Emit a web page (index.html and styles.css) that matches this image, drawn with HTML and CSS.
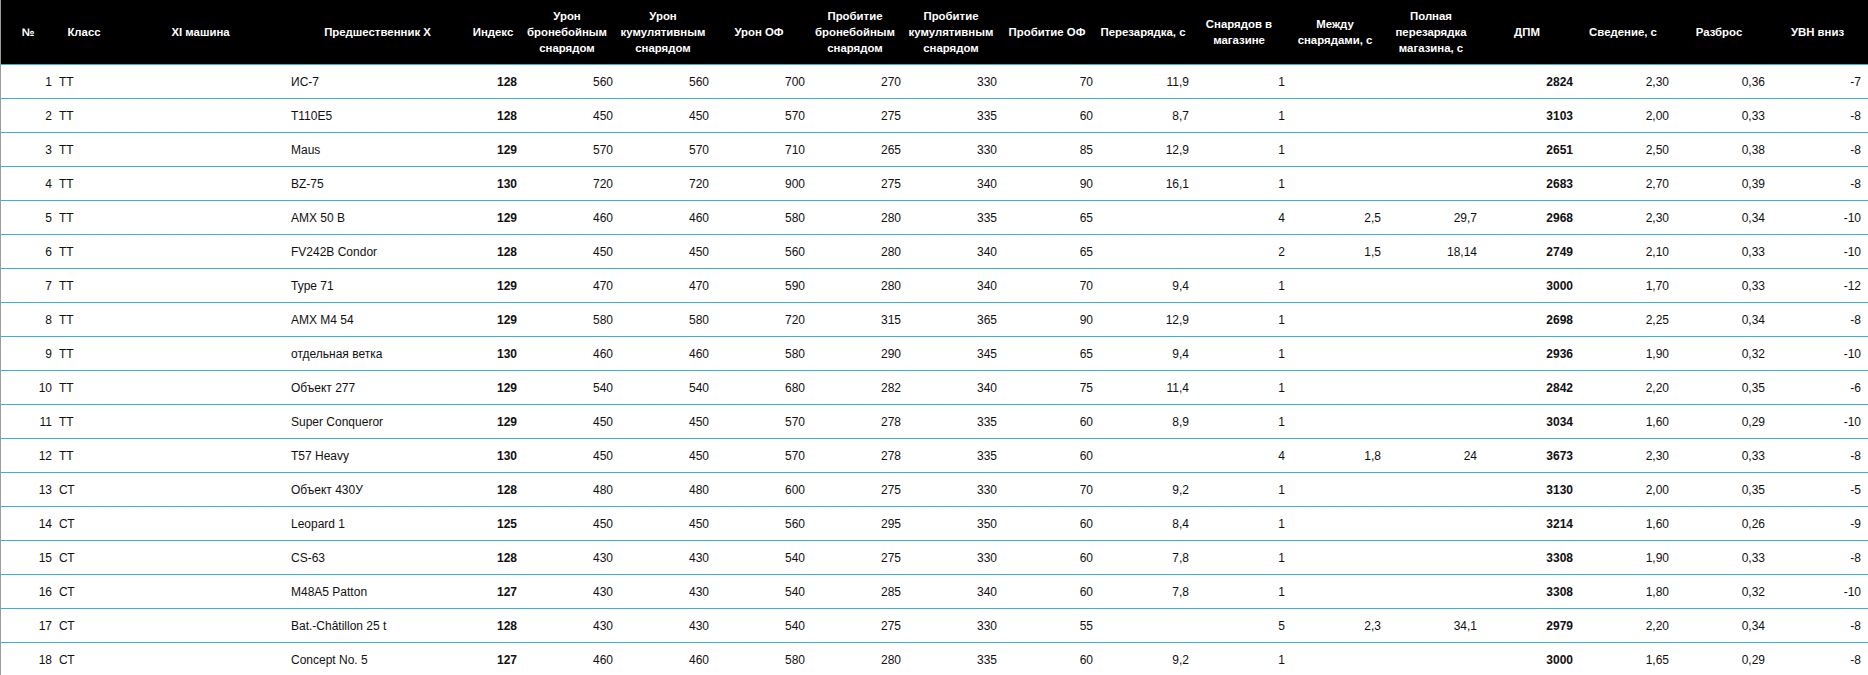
FILE: index.html
```html
<!DOCTYPE html>
<html lang="ru">
<head>
<meta charset="utf-8">
<title>Таблица</title>
<link rel="stylesheet" href="styles.css">
</head>
<body>
<div class="page">
<table class="stats">
<colgroup>
<col class="c-no"><col class="c-cls"><col class="c-xi"><col class="c-pred"><col class="c-idx">
<col class="c-std"><col class="c-std"><col class="c-std"><col class="c-std"><col class="c-std"><col class="c-std"><col class="c-std"><col class="c-std"><col class="c-std"><col class="c-std"><col class="c-std"><col class="c-std"><col class="c-std"><col class="c-last">
</colgroup>
<thead>
<tr>
<th>№</th><th>Класс</th><th>XI машина</th><th>Предшественник X</th><th>Индекс</th>
<th>Урон<br>бронебойным<br>снарядом</th>
<th>Урон<br>кумулятивным<br>снарядом</th>
<th>Урон ОФ</th>
<th>Пробитие<br>бронебойным<br>снарядом</th>
<th>Пробитие<br>кумулятивным<br>снарядом</th>
<th>Пробитие ОФ</th>
<th>Перезарядка, с</th>
<th>Снарядов в<br>магазине</th>
<th>Между<br>снарядами, с</th>
<th>Полная<br>перезарядка<br>магазина, с</th>
<th>ДПМ</th>
<th>Сведение, с</th>
<th>Разброс</th>
<th>УВН вниз</th>
</tr>
</thead>
<tbody id="rows"></tbody>
</table>
</div>
<script src="app.js"></script>
</body>
</html>
```

FILE: styles.css
```css
html, body {
  margin: 0;
  padding: 0;
  background: #ffffff;
}

.page {
  border-left: 1px solid #9c9c9c;
  min-height: 675px;
}

.stats {
  border-collapse: separate;
  border-spacing: 0;
  table-layout: fixed;
  width: 1867px;
  font-family: "Liberation Sans", Arial, sans-serif;
  font-size: 12px;
  color: #111111;
}

.c-no { width: 54px; }
.c-cls { width: 58px; }
.c-xi { width: 175px; }
.c-pred { width: 179px; }
.c-idx { width: 52px; }
.c-std { width: 96px; }
.c-last { width: 101px; }

.stats th {
  background: #000000;
  color: #ffffff;
  font-weight: bold;
  font-size: 11.4px;
  line-height: 16px;
  text-align: center;
  vertical-align: middle;
  white-space: nowrap;
  height: 65px;
  box-sizing: border-box;
  padding: 0 1px;
  border-bottom: 1px solid #3aafe2;
}

.stats td {
  height: 34px;
  box-sizing: border-box;
  padding: 0 2px 0 3px;
  border-bottom: 1px solid #3aafe2;
  vertical-align: middle;
  white-space: nowrap;
  overflow: hidden;
}

.stats td.num {
  text-align: right;
}

.stats td.txt {
  text-align: left;
}

.stats td.b {
  font-weight: bold;
}

.stats td.first {
  padding-right: 3px;
}

.stats td.cls {
  padding-left: 4px;
}

.stats td.lastcol {
  padding-right: 7px;
}
```

FILE: app.js
```js
const data = [
  [1, "ТТ", "ИС-7", 128, 560, 560, 700, 270, 330, 70, "11,9", 1, "", "", 2824, "2,30", "0,36", -7],
  [2, "ТТ", "T110E5", 128, 450, 450, 570, 275, 335, 60, "8,7", 1, "", "", 3103, "2,00", "0,33", -8],
  [3, "ТТ", "Maus", 129, 570, 570, 710, 265, 330, 85, "12,9", 1, "", "", 2651, "2,50", "0,38", -8],
  [4, "ТТ", "BZ-75", 130, 720, 720, 900, 275, 340, 90, "16,1", 1, "", "", 2683, "2,70", "0,39", -8],
  [5, "ТТ", "AMX 50 B", 129, 460, 460, 580, 280, 335, 65, "", 4, "2,5", "29,7", 2968, "2,30", "0,34", -10],
  [6, "ТТ", "FV242B Condor", 128, 450, 450, 560, 280, 340, 65, "", 2, "1,5", "18,14", 2749, "2,10", "0,33", -10],
  [7, "ТТ", "Type 71", 129, 470, 470, 590, 280, 340, 70, "9,4", 1, "", "", 3000, "1,70", "0,33", -12],
  [8, "ТТ", "AMX M4 54", 129, 580, 580, 720, 315, 365, 90, "12,9", 1, "", "", 2698, "2,25", "0,34", -8],
  [9, "ТТ", "отдельная ветка", 130, 460, 460, 580, 290, 345, 65, "9,4", 1, "", "", 2936, "1,90", "0,32", -10],
  [10, "ТТ", "Объект 277", 129, 540, 540, 680, 282, 340, 75, "11,4", 1, "", "", 2842, "2,20", "0,35", -6],
  [11, "ТТ", "Super Conqueror", 129, 450, 450, 570, 278, 335, 60, "8,9", 1, "", "", 3034, "1,60", "0,29", -10],
  [12, "ТТ", "T57 Heavy", 130, 450, 450, 570, 278, 335, 60, "", 4, "1,8", "24", 3673, "2,30", "0,33", -8],
  [13, "СТ", "Объект 430У", 128, 480, 480, 600, 275, 330, 70, "9,2", 1, "", "", 3130, "2,00", "0,35", -5],
  [14, "СТ", "Leopard 1", 125, 450, 450, 560, 295, 350, 60, "8,4", 1, "", "", 3214, "1,60", "0,26", -9],
  [15, "СТ", "CS-63", 128, 430, 430, 540, 275, 330, 60, "7,8", 1, "", "", 3308, "1,90", "0,33", -8],
  [16, "СТ", "M48A5 Patton", 127, 430, 430, 540, 285, 340, 60, "7,8", 1, "", "", 3308, "1,80", "0,32", -10],
  [17, "СТ", "Bat.-Châtillon 25 t", 128, 430, 430, 540, 275, 330, 55, "", 5, "2,3", "34,1", 2979, "2,20", "0,34", -8],
  [18, "СТ", "Concept No. 5", 127, 460, 460, 580, 280, 335, 60, "9,2", 1, "", "", 3000, "1,65", "0,29", -8]
];

const tbody = document.getElementById("rows");
const frag = document.createDocumentFragment();

data.forEach(function (r) {
  const tr = document.createElement("tr");
  const cells = [
    { v: r[0], c: "num first" },
    { v: r[1], c: "txt cls" },
    { v: "", c: "txt" },
    { v: r[2], c: "txt" },
    { v: r[3], c: "num b" },
    { v: r[4], c: "num" },
    { v: r[5], c: "num" },
    { v: r[6], c: "num" },
    { v: r[7], c: "num" },
    { v: r[8], c: "num" },
    { v: r[9], c: "num" },
    { v: r[10], c: "num" },
    { v: r[11], c: "num" },
    { v: r[12], c: "num" },
    { v: r[13], c: "num" },
    { v: r[14], c: "num b" },
    { v: r[15], c: "num" },
    { v: r[16], c: "num" },
    { v: r[17], c: "num lastcol" }
  ];
  cells.forEach(function (cell) {
    const td = document.createElement("td");
    td.className = cell.c;
    td.textContent = String(cell.v);
    tr.appendChild(td);
  });
  frag.appendChild(tr);
});

tbody.appendChild(frag);
```
